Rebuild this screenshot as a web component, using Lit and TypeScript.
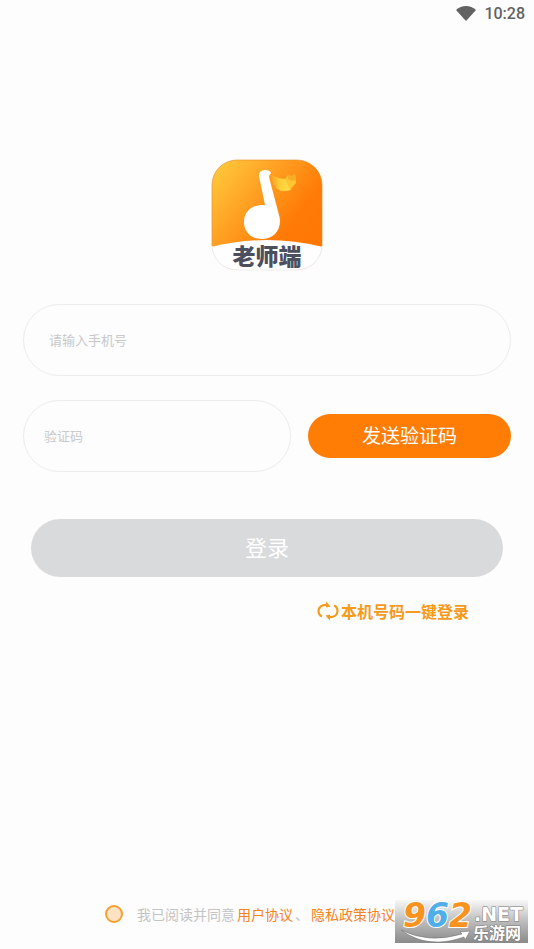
import { LitElement, html, css } from "lit";
import { customElement } from "lit/decorators.js";

@customElement("status-bar")
class StatusBar extends LitElement {
  static styles = css`
    :host {
      display: flex;
      justify-content: flex-end;
      align-items: center;
      gap: 8px;
      height: 28px;
      padding: 0 9px;
      font: 500 16px/20px Roboto, sans-serif;
      color: #626262;
    }
    .wifi {
      display: block;
      width: 20px;
      height: 16px;
    }
  `;
  render() {
    return html`
      <svg class="wifi" viewBox="0 0 20 16" aria-hidden="true">
        <path d="M0 4Q4.500 0 10 0T20 4L10 15Z" fill="#626262" />
      </svg>
      <span>10:28</span>
    `;
  }
}

@customElement("app-logo")
class AppLogo extends LitElement {
  static styles = css`
    :host,
    .logo {
      display: block;
      width: 112px;
      height: 112px;
    }
    .name {
      font: 900 23px "Noto Sans CJK SC", sans-serif;
      fill: #4c4f5e;
    }
  `;
  render() {
    return html`
      <svg class="logo" viewBox="0 0 112 112" role="img" aria-label="老师端">
        <defs>
          <linearGradient id="bg" x1="0" y1="0" x2="1" y2="0.8">
            <stop offset="0" stop-color="#ffcf3e" />
            <stop offset="0.35" stop-color="#ffa526" />
            <stop offset="0.72" stop-color="#ff7a06" />
            <stop offset="1" stop-color="#ff7603" />
          </linearGradient>
          <linearGradient id="flag" x1="0" y1="0" x2="1" y2="0">
            <stop offset="0" stop-color="#ff9a1c" />
            <stop offset="0.5" stop-color="#ffcf3a" />
            <stop offset="1" stop-color="#ffdf4c" />
          </linearGradient>
          <clipPath id="tile"><rect x="1" y="1" width="110" height="110" rx="25" /></clipPath>
        </defs>
        <g clip-path="url(#tile)">
          <rect width="112" height="112" fill="url(#bg)" />
          <path d="M0 88Q56 74 112 88V112H0Z" fill="#fefefe" />
        </g>
        <path d="M1 87V26A25 25 0 0 1 26 1H86A25 25 0 0 1 111 26V87" fill="none" stroke="#e58b25" stroke-opacity=".6" />
        <path d="M1 87A25 25 0 0 0 26 111H86A25 25 0 0 0 111 87" fill="none" stroke="#eeeeee" />
        <path d="M59 14Q66 20 75 20L80 31Q70 34 65 29L61 22Z" fill="url(#flag)" />
        <path d="M74 20L77 16Q82 19 84 15L85 24L79 31Z" fill="#ffc431" />
        <path d="M77 16Q81 18 84 15L85 21Q81 23 77 20Z" fill="#f5ae26" />
        <path d="M48 17Q48 11 54 11Q59 11 60 14L58 17Q58 19 59 22L68 56Q69 59 69 62C69 73 61 80 51 80C40 80 33 73 33 63C33 51 43 45 54 46Z" fill="#fff" />
        <text class="name" x="56" y="106" text-anchor="middle">老师端</text>
      </svg>
    `;
  }
}

@customElement("site-badge")
class SiteBadge extends LitElement {
  static styles = css`
    :host,
    .badge {
      display: block;
      width: 133px;
      height: 43px;
    }
    .badge {
      overflow: visible;
    }
    .digits {
      font: italic 700 33px "DejaVu Sans", sans-serif;
      stroke: #fff;
      stroke-width: 2px;
      paint-order: stroke;
    }
    .orange {
      fill: #f7931e;
    }
    .blue {
      fill: #50aee8;
    }
    .net {
      font: 700 19px "DejaVu Sans", sans-serif;
    }
    .cn {
      font: 700 16px "Noto Sans CJK SC", sans-serif;
    }
    .net,
    .cn {
      fill: #fff;
      stroke: #777;
      stroke-width: 1px;
      paint-order: stroke;
    }
  `;
  render() {
    return html`
      <svg class="badge" viewBox="0 0 133 43" role="img" aria-label="962.NET 乐游网">
        <defs>
          <linearGradient id="shade" x1="0" y1="0" x2="0" y2="1">
            <stop offset="0" stop-color="#f8f8f8" />
            <stop offset="0.5" stop-color="#bcbcbc" />
            <stop offset="1" stop-color="#8a8a8a" />
          </linearGradient>
        </defs>
        <rect width="133" height="43" fill="url(#shade)" />
        <path d="M6 30Q34 44 67 34L65 32L75 31L70 40L69 37Q33 50 6 30Z" fill="#fff" stroke="#777" stroke-width=".6" />
        <text class="digits" x="8" y="27"><tspan class="orange">9</tspan><tspan class="blue">6</tspan><tspan class="orange">2</tspan></text>
        <text class="net" x="79" y="21">.NET</text>
        <text class="cn" x="78" y="39">乐游网</text>
      </svg>
    `;
  }
}

@customElement("app-root")
class AppRoot extends LitElement {
  static styles = css`
    :host {
      display: flex;
      flex-direction: column;
      position: relative;
      box-sizing: border-box;
      min-height: 100vh;
      background: #fdfdfd;
      font-family: "Noto Sans CJK SC", sans-serif;
    }
    * {
      box-sizing: border-box;
    }
    button,
    input {
      margin: 0;
      font-family: inherit;
    }
    button {
      padding: 0 0 4px;
      border: 0;
      cursor: pointer;
    }
    a {
      text-decoration: none;
      color: #f58220;
    }
    .logo {
      align-self: center;
      margin-top: 131px;
    }
    .form {
      display: flex;
      flex-direction: column;
      gap: 24px;
      margin-top: 33px;
      padding: 0 23px;
    }
    .field {
      width: 100%;
      height: 72px;
      padding: 0 25px 2px;
      border: 1px solid #ececec;
      border-radius: 36px;
      outline: none;
      background: transparent;
      font-size: 13px;
      color: #333;
    }
    .field::placeholder {
      color: #c9c9c9;
      opacity: 1;
    }
    .row {
      display: grid;
      grid-template-columns: 268fr 203fr;
      gap: 17px;
      align-items: center;
    }
    .code {
      padding: 0 20px 2px;
    }
    .send {
      height: 44px;
      border-radius: 22px;
      background: #ff7d05;
      color: #fff;
      font-size: 19px;
    }
    .login {
      height: 58px;
      margin: 23px 8px 0;
      border-radius: 29px;
      background: #d9dadc;
      color: #fff;
      font-size: 22px;
    }
    .quick {
      display: flex;
      align-items: center;
      align-self: flex-end;
      gap: 2px;
      margin: 22px 65px 0 0;
      padding: 0;
      background: none;
      color: #f59a1b;
      font-size: 16px;
      font-weight: 700;
      line-height: 24px;
    }
    .swap {
      display: block;
      width: 22px;
      height: 20px;
    }
    .agree {
      display: flex;
      align-items: center;
      gap: 2px;
      margin: auto 0 24px;
      padding-left: 105px;
      font-size: 14px;
      line-height: 22px;
      color: #c4c4c4;
      white-space: nowrap;
    }
    .tick {
      appearance: none;
      width: 18px;
      height: 18px;
      margin: 0 12px 0 0;
      border: 2px solid #f5a033;
      border-radius: 50%;
      background: #fde3c3;
    }
    .badge {
      position: absolute;
      right: 6px;
      bottom: 6px;
    }
  `;
  render() {
    return html`
      <status-bar></status-bar>
      <app-logo class="logo"></app-logo>
      <form class="form" @submit=${(e: Event) => e.preventDefault()}>
        <input class="field" type="tel" aria-label="请输入手机号" placeholder="请输入手机号" />
        <div class="row">
          <input class="field code" inputmode="numeric" aria-label="验证码" placeholder="验证码" />
          <button class="send" type="button">发送验证码</button>
        </div>
        <button class="login" type="submit">登录</button>
      </form>
      <button class="quick" type="button">
        <svg class="swap" viewBox="0 0 22 20" aria-hidden="true">
          <g fill="none" stroke="#f59a1b" stroke-width="2.200">
            <path d="M5 15.500C2.500 14.500 1.500 12.500 1.500 10C1.500 6 5 3.800 9 3.800H11" />
            <path d="M17 4.500C19.500 5.500 20.500 7.500 20.500 10C20.500 14 17 16.200 13 16.200H11" />
          </g>
          <path d="M13.500 5.500L9 .5V6.500ZM8.500 14.500L13 19.500V13.500Z" fill="#f59a1b" />
        </svg>
        <span>本机号码一键登录</span>
      </button>
      <div class="agree">
        <input class="tick" id="agree" type="checkbox" />
        <label for="agree">我已阅读并同意</label>
        <a href="#terms">用户协议</a>
        <span>、</span>
        <a href="#privacy">隐私政策协议</a>
      </div>
      <site-badge class="badge"></site-badge>
    `;
  }
}
